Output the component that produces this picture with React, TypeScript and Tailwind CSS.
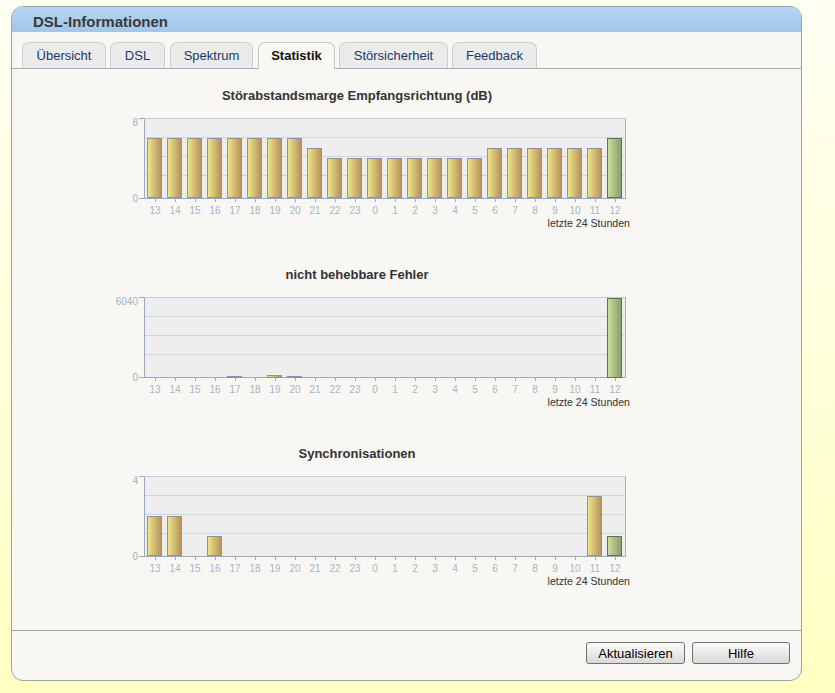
import React from 'react';

const hours = [13, 14, 15, 16, 17, 18, 19, 20, 21, 22, 23, 0, 1, 2, 3, 4, 5, 6, 7, 8, 9, 10, 11, 12];

// bar heights in px (plot is 80px tall)
const charts = [
  {
    title: 'Störabstandsmarge Empfangsrichtung (dB)',
    max: '8',
    bars: [60, 60, 60, 60, 60, 60, 60, 60, 50, 40, 40, 40, 40, 40, 40, 40, 40, 50, 50, 50, 50, 50, 50, 60],
  },
  {
    title: 'nicht behebbare Fehler',
    max: '6040',
    bars: [0, 0, 0, 0, 2, 0, 3, 2, 0, 0, 0, 0, 0, 0, 0, 0, 0, 0, 0, 0, 0, 0, 0, 80],
  },
  {
    title: 'Synchronisationen',
    max: '4',
    bars: [40, 40, 0, 20, 0, 0, 0, 0, 0, 0, 0, 0, 0, 0, 0, 0, 0, 0, 0, 0, 0, 0, 60, 20],
  },
];

const tabs = [
  { label: 'Übersicht', cls: 'w-[84px]' },
  { label: 'DSL', cls: 'ml-[4px] w-[55px]' },
  { label: 'Spektrum', cls: 'ml-[5px] w-[83px]' },
  { label: 'Statistik', cls: 'ml-[5px] w-[77px]', active: true },
  { label: 'Störsicherheit', cls: 'ml-[4px] w-[109px]' },
  { label: 'Feedback', cls: 'ml-[4px] w-[85px]' },
];

function Chart({ title, max, bars }: { title: string; max: string; bars: number[] }) {
  return (
    <div className="ml-[72px] w-[546px] mb-[38px]">
      <div className="h-4 text-center text-[13px] leading-4 font-bold text-[#333]">{title}</div>
      <div className="mt-[14px] flex">
        <div className="w-[55px] h-[81px] flex flex-col justify-between items-end pr-px text-[10px] leading-[10px] text-[#a4b0c2]">
          <span>{max}</span>
          <span className="-mb-[5px]">0</span>
        </div>
        <div className="w-[5px] h-[81px] flex flex-col justify-between">
          <div className="h-px bg-[#9aaabb]" />
          <div className="h-px bg-[#9aaabb]" />
        </div>
        <div className="w-[482px] h-[81px] border-t border-r border-t-[#c4ceda] border-r-[#a8b6c4] border-l border-b border-l-[#9aaabb] border-b-[#9aaabb] bg-[#eeeeee] grid">
          <div className="col-start-1 row-start-1 flex flex-col">
            <div className="h-[19px] border-b border-[#ccd5e0]" />
            <div className="h-[19px] border-b border-[#ccd5e0]" />
            <div className="h-[19px] border-b border-[#ccd5e0]" />
          </div>
          <div className="col-start-1 row-start-1 flex items-end">
            {bars.map((h, i) => (
              <div key={i} className="w-[20px] flex items-end">
                {h > 0 && (
                  <div
                    className={
                      i === 23
                        ? 'ml-[2px] w-[15px] border border-[#5e6e60] bg-gradient-to-r from-[#cadd9a] to-[#8e9e6e]'
                        : 'ml-[2px] w-[15px] border border-[#8a94a0] bg-gradient-to-r from-[#ede589] to-[#b8935e]'
                    }
                    style={{ height: h }}
                  />
                )}
              </div>
            ))}
          </div>
        </div>
      </div>
      <div className="ml-[61px] flex">
        {hours.map((h) => (
          <div key={h} className="w-[20px] flex flex-col items-center">
            <div className="w-px h-[3px] bg-[#9aaabb]" />
            <span className="mt-[3px] text-[10px] leading-[12px] text-[#a9b4c4]">{h}</span>
          </div>
        ))}
      </div>
      <div className="text-right text-[10.6px] leading-[12px] text-[#333]">letzte 24 Stunden</div>
    </div>
  );
}

export default function App() {
  return (
    <div className="h-[693px] w-full bg-gradient-to-b from-[#fffff3] to-[#ffffc2] pt-[6px] pl-[11px] font-['Liberation_Sans',Arial,sans-serif]">
      <div className="w-[791px] h-[675px] flex flex-col border border-[#90a8a8] rounded-[12px] overflow-hidden bg-[#f8f7f3]">
        <div className="h-[25px] pt-[6px] pl-[21px] bg-gradient-to-b from-[#b5d7f5] to-[#a3c5e6] text-[15px] leading-[18px] font-bold text-[#3a3a3a]">
          DSL-Informationen
        </div>
        <div className="flex items-end pt-[10px] pl-[10px] border-b border-[#9cb0b4]">
          {tabs.map((t) => (
            <div
              key={t.label}
              className={
                t.cls +
                (t.active
                  ? ' h-[27px] -mb-px bg-[#f8f7f3] border border-b-0 border-[#c6c6c6] rounded-t-[7px] flex items-center justify-center pb-px text-[13px] leading-[15px] font-bold text-[#111]'
                  : ' h-[26px] bg-[#ebebeb] border border-b-0 border-[#cfcfcf] rounded-t-[7px] flex items-center justify-center text-[13px] leading-[15px] text-[#1d3766]')
              }
            >
              {t.label}
            </div>
          ))}
        </div>
        <div className="flex-1 pt-[19px]">
          {charts.map((c) => (
            <Chart key={c.title} {...c} />
          ))}
        </div>
        <div className="h-[50px] border-t border-[#8ea8a6] flex justify-end items-start gap-[7px] pt-[11px] pr-[11px]">
          <button className="w-[99px] h-[22px] border border-[#707070] rounded-[3px] bg-gradient-to-b from-[#fbfbfb] to-[#d9d9d9] text-[13px] leading-[15px] text-black">
            Aktualisieren
          </button>
          <button className="w-[98px] h-[22px] border border-[#707070] rounded-[3px] bg-gradient-to-b from-[#fbfbfb] to-[#d9d9d9] text-[13px] leading-[15px] text-black">
            Hilfe
          </button>
        </div>
      </div>
    </div>
  );
}
